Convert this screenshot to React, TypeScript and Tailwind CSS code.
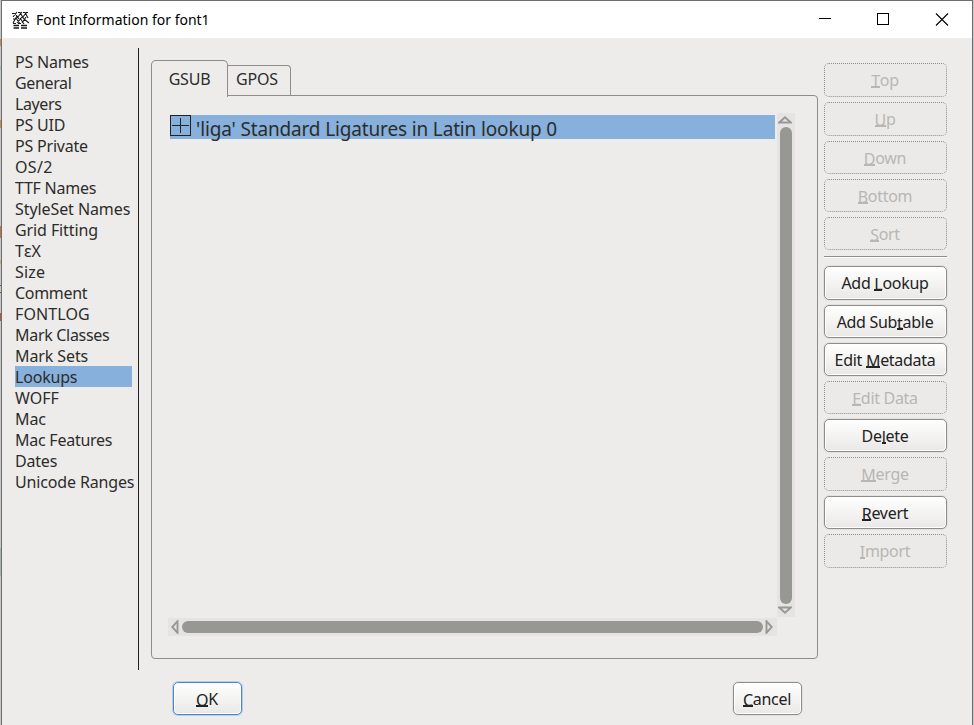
import React from "react";

const sections: [string, string][] = [
  ["PS Names", "tracking-[-0.2px]"],
  ["General", "tracking-[-0.35px]"],
  ["Layers", "tracking-[-0.4px]"],
  ["PS UID", "tracking-[-0.2px]"],
  ["PS Private", "tracking-[-0.2px]"],
  ["OS/2", "tracking-[0.3px]"],
  ["TTF Names", "tracking-[-0.25px]"],
  ["StyleSet Names", "tracking-[-0.08px]"],
  ["Grid Fitting", "tracking-[-0.1px]"],
  ["TεX", ""],
  ["Size", "tracking-[0.2px]"],
  ["Comment", "tracking-[-0.3px]"],
  ["FONTLOG", "tracking-[0.1px]"],
  ["Mark Classes", "tracking-[-0.3px]"],
  ["Mark Sets", "tracking-[-0.1px]"],
  ["Lookups", "tracking-[-0.2px]"],
  ["WOFF", ""],
  ["Mac", "tracking-[-0.1px]"],
  ["Mac Features", "tracking-[-0.25px]"],
  ["Dates", "tracking-[-0.2px]"],
  ["Unicode Ranges", "tracking-[-0.15px]"],
];

type ButtonProps = {
  label: string;
  mnemonic?: number;
  disabled?: boolean;
  primary?: boolean;
  className?: string;
};

function DialogButton({ label, mnemonic = 0, disabled, primary, className = "" }: ButtonProps) {
  const tone = disabled
    ? "border-dotted border-[#8e8e8b] text-[#b7b7b4] bg-[#ebeae8]"
    : primary
      ? "border-[#4a86cc] text-[#222] bg-linear-to-b from-white to-[#e9e8e6] shadow-[0_0_0_1px_#b9cee6,inset_0_0_0_1px_#ffffff]"
      : "border-[#8e8d8a] text-[#222] bg-linear-to-b from-white to-[#e9e8e6] shadow-[0_0_0_1px_#e2e1df,inset_0_0_0_1px_#ffffff]";
  return (
    <button
      type="button"
      disabled={disabled}
      className={`flex shrink-0 items-center justify-center rounded-[5px] border pr-px whitespace-pre font-['Noto_Sans',sans-serif] text-[16px] leading-5 tracking-[-0.3px] ${tone} ${className}`}
    >
      {label.slice(0, mnemonic)}
      <span className="mb-[2px] h-[18px] border-b-2 border-current leading-[22px]">{label[mnemonic]}</span>
      {label.slice(mnemonic + 1)}
    </button>
  );
}

function Arrow({ className = "" }: { className?: string }) {
  return (
    <svg viewBox="0 0 14 8" className={`h-2 w-3.5 shrink-0 ${className}`} fill="none" stroke="#979893" strokeWidth="1.9">
      <path d="M1.200 6.500H12.800L7 1.300Z" />
    </svg>
  );
}

export default function App() {
  return (
    <div className="flex h-[725px] w-[974px] overflow-hidden bg-[#c6c7c9] font-['Noto_Sans',sans-serif] text-[#2c2c2b]">
      <div className="flex w-px flex-col">
        <div className="mt-[39px] h-[7px] bg-[#c98b52]" />
        <div className="mt-[20px] h-1 bg-[#9fbfcc]" />
        <div className="mt-[50px] h-2 bg-[#c98b52]" />
        <div className="mt-[98px] h-3 bg-[#b97648]" />
        <div className="mt-[22px] h-1 bg-[#c8b060]" />
        <div className="mt-[21px] h-px bg-[#2e7d32]" />
        <div className="mt-[6px] h-px bg-[#2e7d32]" />
        <div className="mt-[20px] h-2 bg-[#b05a48]" />
        <div className="mt-[227px] h-7 bg-[#a9b5a8]" />
      </div>
      <div className="flex w-[972px] flex-col border-x border-t border-[#6d6e70] bg-[#edecea]">
        <header className="flex h-[37px] shrink-0 items-center bg-white text-black">
          <svg viewBox="0 0 18 18" className="ml-[10px] h-[18px] w-[18px]" fill="none" stroke="#171717" strokeWidth="1.1">
            <path d="M0 2.500H3L7 8M5 1 1 6M6 1.500H8L12 8M10 1 5 7M11 1.500H13L16 7M15 1 10 7M14 1.500H16" />
            <path d="M5 5 1 12M4 7 8 13M10 6 5 12M8 7 12 13M14 6 10 12M12 8 17 12M1 12.500H4M6 12.500H9M1 8H4" />
            <path d="M1.500 14.500H7M9 14.500H15M1.500 17H7M9 17H15" strokeWidth="1.3" />
          </svg>
          <h1 className="ml-[6px] w-[300px] text-[14px] leading-5">Font Information for font1</h1>
          <svg viewBox="0 0 140 16" className="ml-auto mr-[15px] h-4 w-[140px]" fill="none" stroke="#000" shapeRendering="crispEdges">
            <path d="M2 6.500H14M60.500 1.500H71.500V12.500H60.500Z" />
            <path d="m119 1.500 12 12m0-12-12 12" strokeWidth="1.1" shapeRendering="auto" />
          </svg>
        </header>
        <main className="flex h-[687px]">
          <nav className="mt-[13px] ml-[13px] w-[123px]">
            <ul>
              {sections.map(([name, spacing]) => (
                <li
                  key={name}
                  className={`flex h-[21px] w-[117px] items-center text-[16px] leading-[21px] whitespace-nowrap ${spacing} ${name === "Lookups" ? "bg-[#87b0dc]" : ""}`}
                >
                  <span className="pt-[2px]">{name}</span>
                </li>
              ))}
            </ul>
          </nav>
          <div className="mt-[10px] h-[622px] w-px bg-[#222220]" />
          <div className="ml-[12px] flex w-[667px] flex-col">
            <div className="mt-[22px] flex h-[35px] items-end">
              <div className="relative z-10 -mb-0.5 flex h-[37px] w-[77px] items-center justify-center rounded-t-[5px] border border-b-0 border-[#8d8d8a] bg-[#edecea] text-[16px] tracking-[-0.2px]">
                GSUB
              </div>
              <div className="flex h-[30px] w-[63px] items-center rounded-tr-[4px] border-t border-r border-[#8d8d8a] pb-[3px] pl-2 text-[16px] leading-5 tracking-[-0.2px]">
                GPOS
              </div>
            </div>
            <section className="flex h-[564px] flex-col rounded-b-[4px] rounded-tr-[4px] border border-[#8d8d8a]">
              <div className="ml-[16px] mt-[17px] flex h-[505px]">
                <div className="ml-[2px] mt-[2px] w-[605px]">
                  <div className="flex h-6 items-center bg-[#87b0dc]">
                    <div className="mb-[3px] flex h-[21px] w-[21px] items-center justify-center border border-[#222]">
                      <svg viewBox="0 0 17 17" className="h-[17px] w-[17px]" stroke="#222" shapeRendering="crispEdges">
                        <path d="M0 8.500H17M8.500 1V16" />
                      </svg>
                    </div>
                    <span className="ml-[5px] pt-[4px] text-[19px] leading-6 tracking-[-0.15px] whitespace-nowrap">'liga' Standard Ligatures in Latin lookup 0</span>
                  </div>
                </div>
                <div className="ml-[2px] flex h-[504px] w-[18px] flex-col items-start bg-[#e5e4e2]">
                  <Arrow className="mt-[3px] ml-[1px]" />
                  <div className="mt-[3px] ml-[3px] h-[477px] w-3 rounded-full bg-[#979893]" />
                  <Arrow className="mt-[2px] ml-[1px] rotate-180" />
                </div>
              </div>
              <div className="ml-[16px] flex h-[18px] w-[609px] items-center bg-[#e5e4e2]">
                <Arrow className="-rotate-90" />
                <div className="h-3 w-[581px] rounded-full bg-[#979893]" />
                <Arrow className="-ml-[1px] rotate-90" />
              </div>
            </section>
            <footer className="mt-[23px] ml-[22px] flex">
              <DialogButton label="OK" primary className="h-[33px] w-[69px]" />
              <DialogButton label="Cancel" className="ml-[491px] h-[33px] w-[69px]" />
            </footer>
          </div>
          <aside className="mt-[25px] ml-[6px] flex w-[123px] flex-col gap-[5px]">
            <DialogButton label="Top" disabled className="h-[34px]" />
            <DialogButton label="Up" disabled className="h-[34px]" />
            <DialogButton label="Down" disabled className="h-[33px]" />
            <DialogButton label="Bottom" disabled className="h-[33px]" />
            <DialogButton label="Sort" disabled className="h-[33px]" />
            <hr className="mt-px mb-[4px] h-px border-0 bg-[#8d8d8a] shadow-[0_1px_0_#fff]" />
            <DialogButton label="Add Lookup" mnemonic={4} className="h-[34px]" />
            <DialogButton label="Add Subtable" mnemonic={7} className="h-[33px]" />
            <DialogButton label="Edit Metadata" mnemonic={5} className="h-[33px]" />
            <DialogButton label="Edit Data" disabled className="h-[33px]" />
            <DialogButton label="Delete" mnemonic={2} className="h-[33px]" />
            <DialogButton label="Merge" disabled className="h-[34px]" />
            <DialogButton label="Revert" className="h-[33px]" />
            <DialogButton label="Import" disabled className="h-[34px]" />
          </aside>
        </main>
      </div>
    </div>
  );
}
